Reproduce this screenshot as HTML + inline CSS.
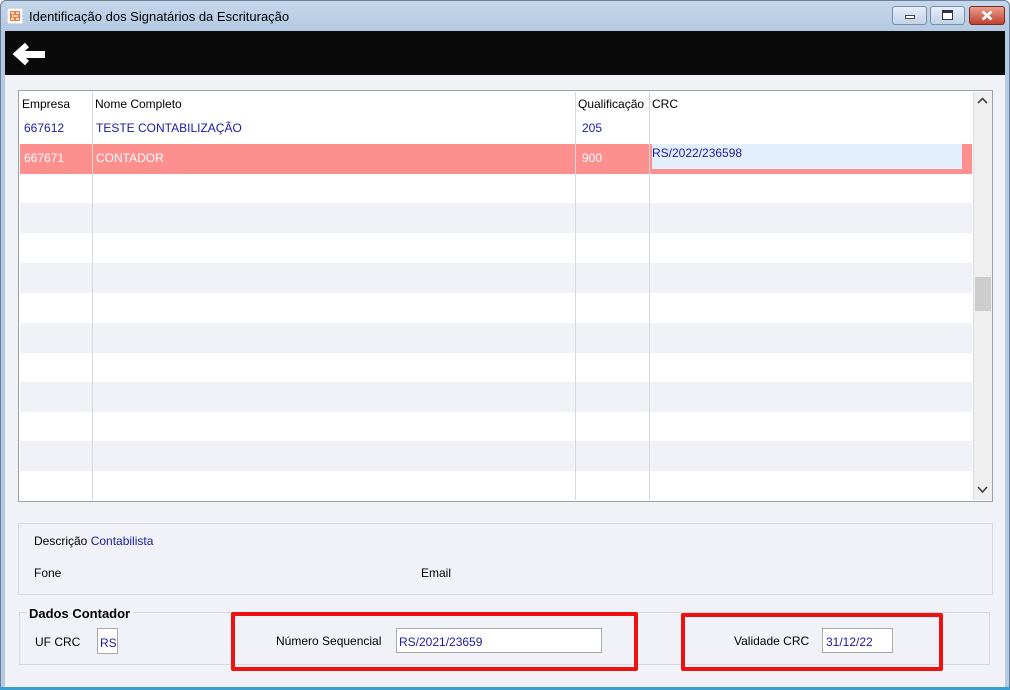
<!DOCTYPE html>
<html><head><meta charset="utf-8"><style>
*{margin:0;padding:0;box-sizing:border-box}
body{width:1010px;height:690px;overflow:hidden;background:#fff;font-family:"Liberation Sans",sans-serif;font-size:12px;color:#000;position:relative}
.a{position:absolute}
.t{position:absolute;white-space:nowrap;font-size:12px}
.blue{color:#1a1aa8}
</style></head><body>
<!-- frame -->
<div class="a" style="left:0;top:0;width:1010px;height:690px;background:linear-gradient(#c5d6ea,#b4c9e2 30px);border:1px solid #6a7f99;border-radius:6px 6px 0 0"></div>
<!-- icon -->
<svg class="a" style="left:7px;top:8px" width="16" height="16"><rect width="16" height="16" fill="#fff" stroke="#bbb"/><rect x="3" y="3" width="10" height="10" fill="#f47a3a"/><path d="M4 5h3M9 5h3M5 8h6M4 11h3M9 11h3" stroke="#fff" stroke-width="1.4"/></svg>
<div class="t" style="left:29px;top:9px;font-size:13px;color:#000">Identificação dos Signatários da Escrituração</div>
<!-- window buttons -->
<div class="a" style="left:892px;top:6px;width:35px;height:19px;border:1px solid #7b8ea8;border-radius:3px;background:linear-gradient(#e6eef8,#c2d2e6)"></div>
<div class="a" style="left:905px;top:15px;width:10px;height:4px;background:#fff;border:1px solid #445"></div>
<div class="a" style="left:930px;top:6px;width:35px;height:19px;border:1px solid #7b8ea8;border-radius:3px;background:linear-gradient(#e6eef8,#c2d2e6)"></div>
<div class="a" style="left:942px;top:10px;width:11px;height:10px;border:1px solid #334;border-top-width:3px;background:#fff"></div>
<div class="a" style="left:969px;top:6px;width:36px;height:19px;border:1px solid #7a2a20;border-radius:3px;background:linear-gradient(#e8a090,#c04030)"></div>
<svg class="a" style="left:981px;top:10px" width="12" height="11"><path d="M1.5 1.5 L10.5 9.5 M10.5 1.5 L1.5 9.5" stroke="#fff" stroke-width="2.6"/></svg>
<!-- toolbar -->
<div class="a" style="left:5px;top:31px;width:1000px;height:44px;background:#0a0a0a"></div>
<svg class="a" style="left:10px;top:40px" width="40" height="30"><path d="M17 5 L7 14 L17 23" fill="none" stroke="#fff" stroke-width="6" stroke-linejoin="miter"/><rect x="9" y="11" width="26" height="7" fill="#fff"/></svg>
<!-- body -->
<div class="a" style="left:5px;top:75px;width:1000px;height:613px;background:#f1f2f7"></div>
<div class="a" style="left:0;top:687px;width:1010px;height:3px;background:#3aa0d0"></div>
<!-- grid -->
<div class="a" style="left:18px;top:90px;width:975px;height:412px;background:#fff;border:1px solid #a0a0a0"></div>
<div class="a" style="left:20px;top:203px;width:952px;height:30px;background:#f1f2f7"></div>
<div class="a" style="left:20px;top:263px;width:952px;height:30px;background:#f1f2f7"></div>
<div class="a" style="left:20px;top:323px;width:952px;height:30px;background:#f1f2f7"></div>
<div class="a" style="left:20px;top:382px;width:952px;height:30px;background:#f1f2f7"></div>
<div class="a" style="left:20px;top:441px;width:952px;height:30px;background:#f1f2f7"></div>
<div class="a" style="left:20px;top:144px;width:952px;height:30px;background:#fe8f8f"></div>
<div class="a" style="left:652px;top:144px;width:310px;height:25px;background:#e3effd"></div>
<div class="a" style="left:92px;top:92px;width:1px;height:408px;background:#d8d8d8"></div>
<div class="a" style="left:575px;top:92px;width:1px;height:408px;background:#d8d8d8"></div>
<div class="a" style="left:649px;top:92px;width:1px;height:408px;background:#d8d8d8"></div>
<div class="t" style="left:22px;top:97px">Empresa</div>
<div class="t" style="left:95px;top:97px">Nome Completo</div>
<div class="t" style="left:578px;top:97px">Qualificação</div>
<div class="t" style="left:652px;top:97px">CRC</div>
<div class="t blue" style="left:24px;top:121px">667612</div>
<div class="t blue" style="left:96px;top:121px">TESTE CONTABILIZAÇÃO</div>
<div class="t blue" style="left:582px;top:121px">205</div>
<div class="t" style="left:24px;top:151px;color:#fff">667671</div>
<div class="t" style="left:96px;top:151px;color:#fff">CONTADOR</div>
<div class="t" style="left:582px;top:151px;color:#fff">900</div>
<div class="t blue" style="left:652px;top:146px">RS/2022/236598</div>
<!-- scrollbar -->
<div class="a" style="left:973px;top:92px;width:19px;height:408px;background:#efefef;border-left:1px solid #ddd"></div>
<svg class="a" style="left:977px;top:97px" width="11" height="8"><path d="M1 6 L5.5 1.5 L10 6" fill="none" stroke="#444" stroke-width="1.6"/></svg>
<div class="a" style="left:975px;top:277px;width:16px;height:34px;background:#cdcdcd"></div>
<svg class="a" style="left:977px;top:486px" width="11" height="8"><path d="M1 1 L5.5 6 L10 1" fill="none" stroke="#444" stroke-width="1.6"/></svg>
<!-- info panel -->
<div class="a" style="left:18px;top:523px;width:975px;height:72px;border:1px solid #d8d8d8"></div>
<div class="t" style="left:34px;top:534px">Descrição <span class="blue">Contabilista</span></div>
<div class="t" style="left:34px;top:566px">Fone</div>
<div class="t" style="left:421px;top:566px">Email</div>
<!-- group -->
<div class="a" style="left:19px;top:612px;width:971px;height:53px;border:1px solid #d8d8d8"></div>
<div class="t" style="left:27px;top:606px;font-weight:bold;font-size:13px;background:#f1f2f7;padding:0 2px">Dados Contador</div>
<div class="t" style="left:35px;top:635px">UF CRC</div>
<div class="a" style="left:97px;top:628px;width:21px;height:26px;background:#fff;border:1px solid #aaa"></div>
<div class="t blue" style="left:100px;top:636px">RS</div>
<div class="t" style="left:276px;top:634px">Número Sequencial</div>
<div class="a" style="left:396px;top:628px;width:206px;height:25px;background:#fff;border:1px solid #aaa"></div>
<div class="t blue" style="left:399px;top:635px">RS/2021/23659</div>
<div class="t" style="left:734px;top:634px">Validade CRC</div>
<div class="a" style="left:822px;top:628px;width:71px;height:25px;background:#fff;border:1px solid #aaa"></div>
<div class="t blue" style="left:826px;top:635px">31/12/22</div>
<!-- red boxes -->
<div class="a" style="left:231px;top:612px;width:407px;height:59px;border:4px solid #ee1111;border-radius:2px"></div>
<div class="a" style="left:681px;top:613px;width:262px;height:58px;border:4px solid #ee1111;border-radius:2px"></div>
</body></html>
